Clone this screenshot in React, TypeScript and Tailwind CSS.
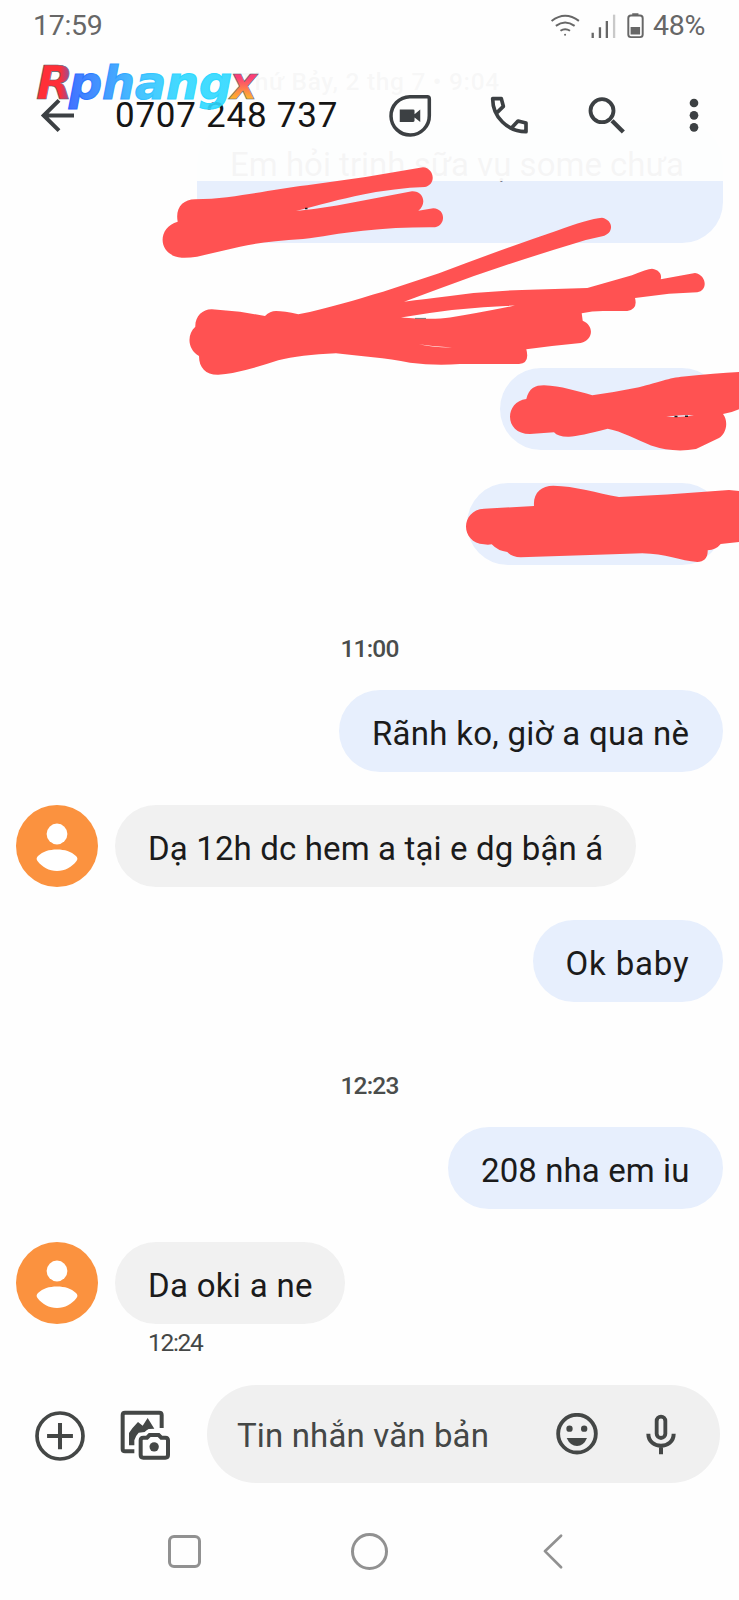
import React from "react";

function Sent({ text, className }: { text?: string; className: string }) {
  return (
    <div className={`mr-4 flex h-[82px] shrink-0 items-center self-end rounded-[41px] bg-[#e7effd] pl-[33px] pt-1.5 text-[33px] whitespace-nowrap text-[#1b1b1b] ${className}`}>
      {text}
    </div>
  );
}

function Avatar() {
  return (
    <svg viewBox="0 0 82 82" className="size-[82px] shrink-0">
      <circle cx="41" cy="41" r="41" fill="#fb923f" />
      <circle cx="41" cy="29" r="10.4" fill="#fff" />
      <path d="M22 51C27 46.500 33 44.500 41 44.500S55 46.500 60 51Q62.500 53.500 60.500 56C56 62 49 66 41 66S26 62 21.500 56Q19.500 53.500 22 51Z" fill="#fff" />
    </svg>
  );
}

function Received({ text, className }: { text: string; className: string }) {
  return (
    <div className="ml-4 flex shrink-0 gap-[17px]">
      <Avatar />
      <div className={`flex h-[82px] items-center rounded-[41px] bg-[#f1f1f1] pl-[33px] pt-1.5 text-[33px] whitespace-nowrap text-[#1b1b1b] ${className}`}>
        {text}
      </div>
    </div>
  );
}

function Time({ text, className }: { text: string; className: string }) {
  return <div className={`shrink-0 text-center text-[24.500px] leading-[30px] font-medium text-[#4a4d4c] ${className}`}>{text}</div>;
}

function Scribbles() {
  return (
    <svg viewBox="0 0 739 600" className="pointer-events-none absolute left-0 top-0 h-[600px] w-[739px]">
      <g fill="#ff5252">
        <path d="M177.700 221.700C175 208 183 199.300 195 199.300Q212 199.300 227 197.300C260 193 280 188.500 307 185.300Q365 178 423 167.300C434 168 437 184 425 187Q395 188 363 194.500C340 199 320 205 296 211Q316 209 337 205.500L412 191.300C424 191 427 204 418.300 210.700L433.300 208.300C446 209 446 225 435 227.300Q398 227 363 230.700C340 233 320 237 303 239Q260 242 240 246.700L197 256.700Q189 258 181.700 257.700C158 256 156 228 177.700 221.700Z" />
        <path fillRule="evenodd" d="M199 356C187 349 187 334 195.300 326.700C195 316 203 309 212 309.300L240 311.700L265 316Q270 311 276 311Q284 311 298.300 314.300C330 308 354 300 383 291.700L439 273.300Q500 250 556 231Q588 219 602 217.700C614 220 614 234 602.300 236.300Q588 239 572 244.300Q500 266 439 288.700L404 301.700Q425 299 450 296Q485 291 522 290L587.300 288L632 275.300Q647 269 652 268.700C660 270 662 275 660.700 279.300L695 273C707 275 708 291 697.300 292.300L669 293.700L635 298Q638 309 627.300 311L603 311Q592 311 581.700 313.300L582.700 320.700C594 325 594 340 580.700 343L552 346L526.300 349.300Q530 363 519 364L460 364Q435 366 410 362.700C386 358 360 356 336 353.300Q300 355 278.300 360.300Q237 374 218.300 374.700C206 375 199 368 199 356Z M401 317.500Q460 307 515 305.500Q478 313 450 317.500Q433 320 401 317.500Z M418.700 344.300Q436 347 452 347.500Q438 348 418.700 344.300Z" />
        <path fillRule="evenodd" d="M526.300 399C529 388 535 385.300 544 385.300C561 386 577 391 592.300 395.300Q616 392 639 387.300C660 382 668 378 684 376.500Q715 373 739 372V409.300Q731 413 723 414C729 422 726 434 719 438L696 449Q673 453 651 445.500C638 440 621 431 607.700 428.700Q580 436 569 436.700Q558 437 554 432.300L530 434C504 434 504 402 526.300 399Z M666.300 416.700Q682 414.500 694 415.300Q681 418 666.300 416.700Z" />
        <path d="M484 508.700L534 506C533 493 541 485.700 553.300 485.700C575 486 597 493 619 497L667 494.500L729 490L739 491V542L720.700 544Q716 550 707.700 550.300C708 558 704 562 697.300 562C681 561 665 553.500 642.300 553.300L590 555L520.700 557.300Q512 557 507.300 552Q498 551 491.700 544.300Q488 545 484 544.300C460 543 460 510 484 508.700Z" />
      </g>
      <path d="M305 208.500h2.500M674.500 416.500h3M685 416.200h3" stroke="#1b1b1b" strokeWidth="1.500" />
      <path d="M415 318.400h11" stroke="#777" strokeWidth="1" />
    </svg>
  );
}

function Logo() {
  return (
    <svg viewBox="0 0 240 62" className="absolute left-[30px] top-[56px] h-[62px] w-[240px]" fontFamily="DejaVu Sans" fontWeight="700" fontStyle="italic" fontSize="47" stroke="#52636f" strokeWidth="0.600">
      <defs>
        <linearGradient id="lr"><stop offset="0.650" stopColor="#ff3038" /><stop offset="1" stopColor="#7257bd" /></linearGradient>
        <linearGradient id="lp"><stop stopColor="#2c62ff" /><stop offset="0.450" stopColor="#34bfff" /><stop offset="0.700" stopColor="#2fd8ff" /></linearGradient>
        <linearGradient id="lx" x1="0" y1="0" x2="0" y2="1"><stop offset="0.400" stopColor="#fc3e76" /><stop offset="0.780" stopColor="#ffb12c" /></linearGradient>
      </defs>
      <text x="6" y="43" textLength="37" lengthAdjust="spacingAndGlyphs" fill="url(#lr)">R</text>
      <text x="39" y="43" textLength="163" lengthAdjust="spacingAndGlyphs" fill="url(#lp)" stroke="url(#lp)" strokeWidth="1.200" fillOpacity="0.900">phang</text>
      <text x="200" y="43" textLength="27" lengthAdjust="spacingAndGlyphs" fontSize="46" fill="url(#lx)">x</text>
    </svg>
  );
}

function StatusBar() {
  return (
    <div className="flex h-[50px] items-center pl-[33px] pt-0.5 text-[28.500px] text-[#676767]">
      <span className="w-[517px] tracking-[-0.300px]">17:59</span>
      <svg viewBox="545 36 200 76" className="h-[25px] w-[67px]" fill="none" stroke="#676767" strokeWidth="6">
        <path d="M548 57Q589 25 631 57M561 72Q589 51 618 72M575 87Q589 77 604 87" />
        <circle cx="589" cy="99" r="3" fill="#676767" stroke="none" />
        <path d="M673 93V109M695 76V109M716 57V109" strokeWidth="7" />
        <path d="M738 38V109" stroke="#c9c9c9" strokeWidth="7" />
      </svg>
      <svg viewBox="774 35 52 78" className="ml-[10px] h-[26px] w-[17px]" fill="none" stroke="#676767" strokeWidth="6">
        <rect x="778" y="42" width="44" height="66" rx="8" />
        <path d="M790 38H809" />
        <path d="M785 77H814V100H785Z" fill="#676767" stroke="none" />
      </svg>
      <span className="ml-[9px] tracking-[-0.300px]">48%</span>
    </div>
  );
}

function Header() {
  return (
    <header className="absolute inset-x-0 top-0 h-[181px] bg-[#fefefe]/[0.960]">
      <StatusBar />
      <div className="flex h-[130px] items-center pl-[40px]">
        <svg viewBox="120 292 105 105" className="h-[35px] w-[35px]" fill="none" stroke="#3c4043" strokeWidth="12">
          <path d="M222 344.500H131M177 299L131 344.500L177 390" />
        </svg>
        <span className="ml-[40px] w-[273px] pt-[3px] text-[35px] tracking-[0.750px] whitespace-nowrap text-[#151515]">0707 248 737</span>
        <svg viewBox="62 280 128 128" className="ml-px h-[43px] w-[43px]">
          <path d="M124 288H176Q182 288 182 294V344A57 57 0 1 1 124 288Z" fill="none" stroke="#3c4043" strokeWidth="10.500" />
          <path d="M94 326H134Q138 326 138 330V340L155 326V363L138 350V359Q138 363 134 363H94Z" fill="#3c4043" />
        </svg>
        <svg viewBox="360 284 123 120" className="ml-[57px] h-[40px] w-[41px]" fill="none" stroke="#3c4043" strokeWidth="11" strokeLinejoin="round">
          <path d="M384 337L403 318L397 295H371C371 350 416 394 471 394V368L447 362L428 382" />
        </svg>
        <svg viewBox="655 285 117 117" className="ml-[57px] h-[39px] w-[39px]" fill="none" stroke="#3c4043" strokeWidth="11.500">
          <circle cx="700" cy="329" r="34.500" />
          <path d="M730 359L764 393" strokeWidth="13" />
        </svg>
        <svg viewBox="960 290 30 108" className="ml-[63px] h-[36px] w-[10px]" fill="#3c4043">
          <circle cx="975" cy="308" r="13" /><circle cx="975" cy="345" r="13" /><circle cx="975" cy="381" r="13" />
        </svg>
      </div>
    </header>
  );
}

function Composer() {
  return (
    <div className="mt-[27px] flex h-[98px] shrink-0 items-center pl-[34.500px]">
      <svg viewBox="104 123 149 149" className="mt-[3px] size-[50px] shrink-0" fill="none" stroke="#444746">
        <circle cx="178.500" cy="197.500" r="68.500" strokeWidth="11" />
        <path d="M140 197.500H217M178.500 159V237" strokeWidth="12" />
      </svg>
      <svg viewBox="361 122 153 153" className="ml-[35.500px] mt-[3px] size-[51px] shrink-0" fill="none" stroke="#444746" strokeWidth="12">
        <path d="M486 176V137Q486 130 479 130H376Q369 130 369 137V239Q369 246 376 246H404" />
        <path d="M388 228V191L398 177L415 158L429 169L444 146L464 178L447 179Q441 182 435 188L417 190Q407 200 404 213V228Z" fill="#444746" stroke="none" />
        <path d="M431 205H442L450 197H477L485 205H497Q505 205 505 213V257Q505 265 497 265H431Q423 265 423 257V213Q423 205 431 205Z" />
        <circle cx="463.500" cy="232.500" r="14" fill="#444746" stroke="none" />
      </svg>
      <div className="ml-[36px] flex h-[98px] w-[513px] items-center rounded-full bg-[#f0f0f0] pl-[30px]">
        <span className="w-[319px] pt-1 text-[33px] tracking-[0.150px] whitespace-nowrap text-[#444746]">Tin nhắn văn bản</span>
        <svg viewBox="561 129 126 126" className="size-[42px] shrink-0" fill="#444746">
          <circle cx="624" cy="191" r="56.500" fill="none" stroke="#444746" strokeWidth="11.500" />
          <circle cx="601.500" cy="176" r="9.500" /><circle cx="645.500" cy="176" r="9.500" />
          <path d="M593 204H654Q644 228 624 228T593 204Z" />
        </svg>
        <svg viewBox="831 126 90 123" className="ml-[48px] h-[41px] w-[30px] shrink-0" fill="none" stroke="#444746" strokeWidth="11.500">
          <rect x="863" y="134" width="26" height="64" rx="13" />
          <path d="M838 185C838 233 914 233 914 185M876 220V247" strokeWidth="12" />
        </svg>
      </div>
    </div>
  );
}

function NavBar() {
  return (
    <nav className="mt-[49px] flex h-[38px] shrink-0 items-center pl-[168px]">
      <div className="size-[33px] rounded-[6px] border-[3px] border-[#919191]" />
      <div className="ml-[150px] size-[37px] rounded-full border-[3px] border-[#919191]" />
      <svg viewBox="521 488 64 110" className="ml-[154px] h-[37px] w-[22px]" fill="none" stroke="#919191" strokeWidth="8" strokeLinecap="round" strokeLinejoin="round">
        <path d="M577 496L529 542L577 590" />
      </svg>
    </nav>
  );
}

export default function App() {
  return (
    <div className="relative flex h-[1600px] w-[739px] flex-col overflow-hidden bg-[#fefefe] font-['Roboto','Noto_Sans',sans-serif]">
      <Time text="Thứ Bảy, 2 thg 7 • 9:04" className="mt-[67px] tracking-[0.700px]" />
      <div className="mr-4 mt-[25px] h-[121px] w-[526px] shrink-0 self-end rounded-[41px] bg-[#e7effd] pl-[33px] pt-[23px] text-[33px] leading-[39px] whitespace-nowrap text-[#1b1b1b]">
        <span>Em hỏi trinh sữa vụ some chưa</span>
      </div>
      <Sent className="mt-[125px] w-[223px]" />
      <Sent className="mt-[33px] w-[256px]" />
      <Time text="11:00" className="mt-[69px] tracking-[-0.800px]" />
      <Sent text="Rãnh ko, giờ a qua nè" className="mt-[26px] mb-[33px] w-[384px] tracking-[0.270px]" />
      <Received text="Dạ 12h dc hem a tại e dg bận á" className="w-[521px] tracking-[0.140px]" />
      <Sent text="Ok baby" className="mt-[33px] w-[190.500px] tracking-[0.850px]" />
      <Time text="12:23" className="mt-[69px] tracking-[-0.800px]" />
      <Sent text="208 nha em iu" className="mt-[26px] mb-[33px] w-[275px] tracking-[0.100px]" />
      <Received text="Da oki a ne" className="w-[230px] tracking-[0.300px]" />
      <div className="ml-[148px] mt-1 h-[30px] shrink-0 text-[24.500px] leading-[30px] tracking-[-1.300px] text-[#444746]">12:24</div>
      <Composer />
      <NavBar />
      <Header />
      <Scribbles />
      <Logo />
    </div>
  );
}
